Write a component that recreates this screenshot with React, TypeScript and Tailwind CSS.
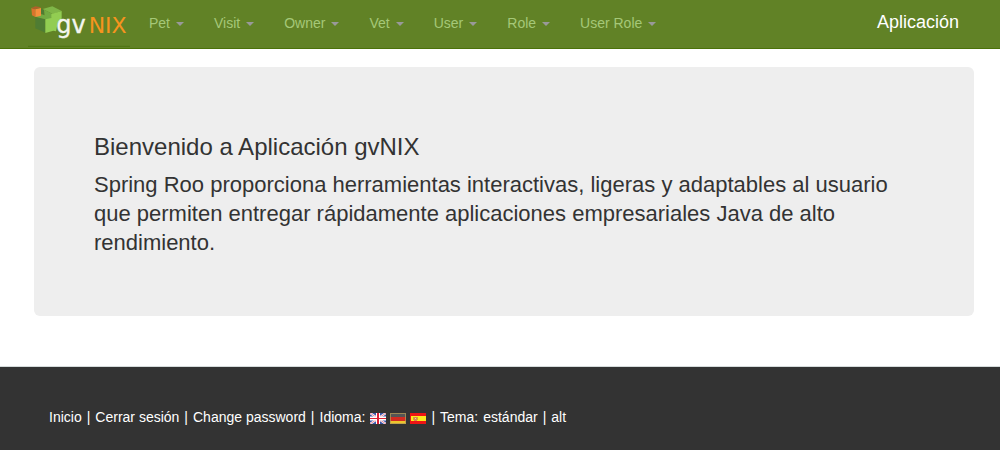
const menus = ['Pet', 'Visit', 'Owner', 'Vet', 'User', 'Role', 'User Role'];

function Logo() {
  return (
    <svg viewBox="24 0 306 144" className="h-12 w-[102px]" role="img" aria-label="gvNIX">
      <path d="M46 50 76 58V98L46 85Z" fill="#4f7c33" />
      <path d="M62 26 72 29V44L62 40Z" fill="#4f7c33" />
      <path d="M68 27 97 19 125 33 98 42Z" fill="#7fb648" />
      <path d="M62 42 74 46 72 29 98 42V48L92 58H76L46 50Z" fill="#72aa42" />
      <path d="M76 58 94 54V42L125 33V66H114L108 94 100 92 76 99Z" fill="#92cd52" />
      <path d="M34 24 46 28V51L36 46Z" fill="#d9742c" />
      <path d="M34 24 46 19 64 22 46 28Z" fill="#b0602a" />
      <path d="M46 28 63 24V47L46 51Z" fill="#f58f3c" />
      <text x="109" y="99" fontSize="72" fill="#f4f6ef" stroke="#f4f6ef" strokeWidth="1" fontFamily="DejaVu Sans, sans-serif">gv</text>
      <text x="206" y="100" fontSize="66" fill="#f7941e" fontFamily="DejaVu Sans, sans-serif">NIX</text>
      <path d="M24 139H330" stroke="#4f7413" strokeWidth="3" />
    </svg>
  );
}

function BritishFlag() {
  return (
    <svg viewBox="0 0 16 11" className="h-[11px] w-4" aria-hidden="true">
      <rect width="16" height="11" fill="#3b55a8" />
      <path d="M0 0 16 11M16 0 0 11" stroke="#fff" strokeWidth="2.2" />
      <path d="M0 0 16 11M16 0 0 11" stroke="#d8304a" strokeWidth=".6" />
      <path d="M8 0V11M0 5.5H16" stroke="#fff" strokeWidth="4" />
      <path d="M8 0V11" stroke="#dc1f35" strokeWidth="2" />
      <path d="M0 5.5H16" stroke="#dc1f35" strokeWidth="1" />
    </svg>
  );
}

function GermanFlag() {
  return (
    <svg viewBox="0 0 16 11" className="h-[11px] w-4" aria-hidden="true">
      <rect width="16" height="4" fill="#555" />
      <rect y="4" width="16" height="4" fill="#d42a20" />
      <rect y="8" width="16" height="3" fill="#edc52c" />
      <rect x=".5" y=".5" width="15" height="10" fill="none" stroke="#b39a55" strokeOpacity=".75" />
    </svg>
  );
}

function SpanishFlag() {
  return (
    <svg viewBox="0 0 16 11" className="h-[11px] w-4" aria-hidden="true">
      <rect width="16" height="11" fill="#ee1515" />
      <rect x="1" y="3" width="15" height="5" fill="#fbea1e" />
      <path d="M3 4h1v3h-1zM7 4h1v3h-1z" fill="#d6a526" />
      <rect x="4" y="4" width="3" height="4" fill="#d88a4d" />
      <rect x="5" y="5" width="1" height="1" fill="#e8c3c0" />
    </svg>
  );
}

export default function App() {
  return (
    <div className="flex min-h-screen flex-col bg-white font-['Liberation_Sans',Arial,sans-serif] text-sm text-[#333]">
      <header className="flex items-start border-b border-[#4b7209] bg-[#618226] pr-[41px] pl-7">
        <a href="#inicio">
          <Logo />
        </a>
        <nav className="flex grow pl-1">
          {menus.map((name) => (
            <button key={name} type="button" className="flex items-center gap-1.5 px-[15px] py-[13px] leading-5 text-[#a5c878]">
              {name}
              <span className="mt-0.5 border-x-4 border-t-4 border-x-transparent border-t-[#999]" />
            </button>
          ))}
        </nav>
        <a href="#aplicacion" className="py-3 text-lg leading-5 text-white">
          Aplicación
        </a>
      </header>

      <main className="grow pt-[18px] pr-[26px] pb-[50px] pl-[34px]">
        <section className="rounded-md bg-[#eee] px-[60px] pt-[67px] pb-[59px]">
          <h1 className="mb-[10px] text-2xl leading-[26px]">Bienvenido a Aplicación gvNIX</h1>
          <p className="text-[22px] leading-[29px]">
            Spring Roo proporciona herramientas interactivas, ligeras y adaptables al usuario que permiten entregar
            rápidamente aplicaciones empresariales Java de alto rendimiento.
          </p>
        </section>
      </main>

      <footer className="flex flex-wrap items-center gap-[5px] border-t border-[#d5dbdb] bg-[#333] px-[49px] pt-10 pb-[23px] leading-5 text-white">
        <a href="#inicio">Inicio</a>
        <span>|</span>
        <a href="#salir">Cerrar sesión</a>
        <span>|</span>
        <a href="#password">Change password</a>
        <span>|</span>
        <span>Idioma:</span>
        <span className="flex gap-1 pt-0.5">
          <a href="#en" aria-label="English"><BritishFlag /></a>
          <a href="#de" aria-label="Deutsch"><GermanFlag /></a>
          <a href="#es" aria-label="Español"><SpanishFlag /></a>
        </span>
        <span>|</span>
        <span>Tema:</span>
        <a href="#estandar">estándar</a>
        <span>|</span>
        <a href="#alt">alt</a>
      </footer>
    </div>
  );
}
